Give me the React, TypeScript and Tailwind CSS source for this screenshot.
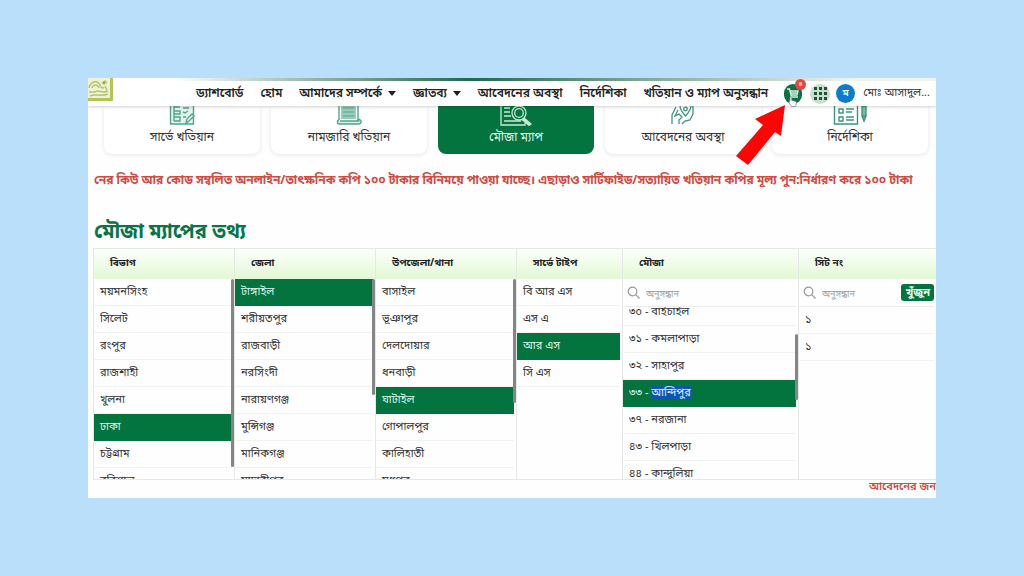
import type { ReactNode } from "react";

const nav = [
  { label: "ড্যাশবোর্ড" },
  { label: "হোম" },
  { label: "আমাদের সম্পর্কে", menu: true },
  { label: "জ্ঞাতব্য", menu: true },
  { label: "আবেদনের অবস্থা" },
  { label: "নির্দেশিকা" },
  { label: "খতিয়ান ও ম্যাপ অনুসন্ধান" },
];

function SurveyIcon() {
  return (
    <svg width="26" height="20" viewBox="0 0 26 20" fill="none" stroke="#4fa58b" strokeWidth="1.4">
      <path d="M1.5 0V18H24.500V0" fill="#e3f3ec" />
      <path d="M5 0v15M5 1h6M5 5h6v3H5M5 11h6v4H5M14 2h6M14 6l2 1 3-2M14 11h3" />
      <path d="M17 17l1-4 5-5 2 2-5 5z" fill="#fff" />
    </svg>
  );
}

function ScrollIcon() {
  return (
    <svg width="26" height="20" viewBox="0 0 26 20" fill="none" stroke="#4fa58b" strokeWidth="1.4">
      <path d="M3 0V14M22 0V14" />
      <path d="M5 0V13H20V0" fill="#9accbb" stroke="none" />
      <path d="M7 2h11M7 6h11M7 10h11" stroke="#6db59e" />
      <path d="M3 14c-2 0-2 4 0 4h20c2 0 3-3 1-4-1-1-3 0-2 1H4" fill="#d9eee6" />
    </svg>
  );
}

function MapSearchIcon() {
  return (
    <svg width="32" height="20" viewBox="0 0 32 20" fill="none" stroke="#c6ead7" strokeWidth="1.3">
      <path d="M1 0V19H25V17M4 2h6M4 6h6M4 10h7M4 15h17" />
      <circle cx="19" cy="7" r="7" />
      <circle cx="19" cy="7" r="4.300" />
      <path d="M24 12l7 6-2 1.500-7-6" fill="#c6ead7" />
    </svg>
  );
}

function HandPinIcon() {
  return (
    <svg width="26" height="20" viewBox="0 0 26 20" fill="none" stroke="#3c957a" strokeWidth="1.3">
      <path d="M10 0C10 4 13 7 15.500 10C18 7 21 4 21 0" />
      <circle cx="15.500" cy="3" r="1.800" />
      <path d="M6 1L2 9v9M8 4L5 10l4-2 3 3-3 3v4M23 0v8l-3 6-5 1-3 3" />
    </svg>
  );
}

function GuideIcon() {
  return (
    <svg width="34" height="20" viewBox="0 0 34 20" fill="none" stroke="#3c957a" strokeWidth="1.4">
      <path d="M1.500 0V18H24.500V0" />
      <path d="M6 3h4v4H6zM6 11h4v4H6zM13 3h8M13 6h6M13 11h8M13 14h8" />
      <path d="M29 0v10l2 5 2-5V0zM29 10h4" fill="#7dbba4" />
    </svg>
  );
}

const cards: { label: string; icon: ReactNode; active?: boolean }[] = [
  { label: "সার্ভে খতিয়ান", icon: <SurveyIcon /> },
  { label: "নামজারি খতিয়ান", icon: <ScrollIcon /> },
  { label: "মৌজা ম্যাপ", icon: <MapSearchIcon />, active: true },
  { label: "আবেদনের অবস্থা", icon: <HandPinIcon /> },
  { label: "নির্দেশিকা", icon: <GuideIcon /> },
];

function Row({ children, active }: { children: ReactNode; active?: boolean }) {
  return (
    <li>
      <button
        className={
          active
            ? "block h-[27px] w-full truncate bg-[#04743f] px-1.5 text-left text-[11px] leading-[25px] text-[#d9f5e6]"
            : "block h-[27px] w-full truncate border-b border-[#f1f3f1] px-1.5 text-left text-[11px] leading-[25px] text-[#333]"
        }
      >
        {children}
      </button>
    </li>
  );
}

function Column({
  title,
  bar,
  children,
}: {
  title: string;
  bar?: string;
  children: ReactNode;
}) {
  return (
    <section className="relative flex min-w-0 flex-col overflow-hidden border-l border-[#e6e8e6]">
      <h2 className="h-[30px] shrink-0 bg-linear-to-b from-[#fcfffa] to-[#e2f8d5] pl-4 text-[10px] leading-[30px] font-bold text-[#222]">
        {title}
      </h2>
      <div className="flex min-h-0 flex-1 flex-col overflow-hidden pr-0.5">{children}</div>
      {bar && <span className={"absolute right-0 w-[3px] rounded-full bg-[#858585] " + bar} />}
    </section>
  );
}

function Search({ label, action }: { label: string; action?: boolean }) {
  return (
    <div className="flex h-7 shrink-0 items-center gap-1.5 border-b border-[#ececec] pl-1">
      <svg width="13" height="13" viewBox="0 0 13 13" fill="none" stroke="#999" strokeWidth="1.2">
        <circle cx="5.500" cy="5.500" r="4.300" />
        <path d="M8.700 8.700L12.500 12.500" />
      </svg>
      <input
        aria-label={label}
        placeholder="অনুসন্ধান"
        className="h-5 w-0 min-w-0 flex-1 pt-1 text-[9px] outline-none placeholder:text-[#999]"
      />
      {action && (
        <button className="h-[17px] rounded-[3px] bg-[#04743f] px-1 text-[11px] leading-4 font-bold text-[#e3f7ec]">
          খুঁজুন
        </button>
      )}
    </div>
  );
}

const divisions = ["ময়মনসিংহ", "সিলেট", "রংপুর", "রাজশাহী", "খুলনা", "ঢাকা", "চট্টগ্রাম", "বরিশাল"];
const districts = ["টাঙ্গাইল", "শরীয়তপুর", "রাজবাড়ী", "নরসিংদী", "নারায়ণগঞ্জ", "মুন্সিগঞ্জ", "মানিকগঞ্জ", "মাদারীপুর"];
const upazilas = ["বাসাইল", "ভূঞাপুর", "দেলদোয়ার", "ধনবাড়ী", "ঘাটাইল", "গোপালপুর", "কালিহাতী", "মধুপুর"];
const surveys = ["বি আর এস", "এস এ", "আর এস", "সি এস"];
const mouzas = [
  ["৩০", "বাইচাইল"],
  ["৩১", "কমলাপাড়া"],
  ["৩২", "সাহাপুর"],
  ["৩৩", "আন্দিপুর"],
  ["৩৭", "নরজানা"],
  ["৪৩", "খিলপাড়া"],
  ["৪৪", "কান্দুলিয়া"],
];

export default function App() {
  return (
    <div className="min-h-screen bg-[#badffb] px-[88px] py-[78px] font-['Noto_Sans_Bengali','Noto_Sans',sans-serif]">
      <main className="relative overflow-hidden bg-[#fefefe]">
        <header className="relative z-10 bg-white shadow-[0_1px_3px_rgba(0,0,0,0.18)]">
          <div className="h-[3px] bg-linear-to-r from-white from-10% via-[#1c6a4c] via-45% to-[#eef5ee] to-90%" />
          <div className="flex h-[25px] items-center pr-1.5">
            <svg className="-mt-[3px] mr-auto shrink-0 self-start" width="25" height="23" viewBox="0 0 25 23">
              <path d="M0 0H25V23H0z" fill="#b3c45a" />
              <path d="M0 0H22V20H0z" fill="#eff3cf" />
              <path
                d="M1 10c1-6 8-9 11-3 1 3 3 4 4 2M4 10c1-4 6-4 7 0M14 5l3-2 2 2M1 14h6c3-3 7 2 13-1M2 18c5-3 10 1 18-2M17 8l2 4"
                fill="none"
                stroke="#b5c476"
                strokeWidth="1.5"
              />
              <circle cx="16" cy="5" r="1.500" fill="#8fae4e" />
            </svg>
            <nav className="flex items-center gap-[17px] text-[12px] whitespace-nowrap text-[#222]">
              {nav.map((n) => (
                <a key={n.label} href="#" className="flex items-center gap-1.5 font-semibold">
                  {n.label}
                  {n.menu && <span className="border-x-4 border-t-[5px] border-x-transparent border-t-[#222]" />}
                </a>
              ))}
            </nav>
            <button aria-label="কার্ট" className="relative ml-4 h-5 w-[18px] shrink-0 rounded-full bg-[#0b7044]">
              <svg className="block" width="18" height="24" viewBox="0 0 18 24" fill="none" stroke="#d9efe4" strokeWidth="1.4">
                <path d="M3 5h2.500l2 8H14M6 7h8l-1 4H7M7 9h7" />
                <path
                  d="M6 15.500v-2c0-1.200 1.800-1.200 1.800 0v3l3.500.8c1 .3 1.200 1 1 2l-.7 3.200H7.500L5 19z"
                  fill="#fff"
                  stroke="#777"
                  strokeWidth="0.700"
                />
              </svg>
              <span className="absolute -top-[5px] -right-1 size-[11px] rounded-full bg-[#e5453f] text-center text-[7px] leading-[11px] text-white">
                ৪
              </span>
            </button>
            <button aria-label="মেনু" className="ml-2 flex size-5 shrink-0 items-center justify-center rounded-full bg-[#c3e2cc]">
              <svg width="13" height="13" viewBox="0 0 13 13" fill="#2c4a3a">
                <path d="M0 0h3v3H0zM5 0h3v3H5zM10 0h3v3h-3zM0 5h3v3H0zM5 5h3v3H5zM10 5h3v3h-3zM0 10h3v3H0zM5 10h3v3H5zM10 10h3v3h-3z" />
              </svg>
            </button>
            <span className="ml-1.5 size-[19px] shrink-0 rounded-full bg-[#0c7bd0] text-center text-[10px] leading-[20px] font-semibold text-white">
              ম
            </span>
            <span className="ml-2 text-[11px] whitespace-nowrap text-[#333]">মোঃ আসাদুল...</span>
          </div>
        </header>
        <div className="grid grid-cols-5 gap-[11px] pr-2 pl-4">
          {cards.map((c) => (
            <button
              key={c.label}
              className={
                c.active
                  ? "flex h-12 flex-col items-center rounded-b-lg bg-[#04743f] text-[12px] leading-5 text-[#e3f7ec]"
                  : "flex h-12 flex-col items-center rounded-b-lg bg-white text-[12px] leading-5 text-[#333] shadow-[0_1px_4px_rgba(0,0,0,0.1)]"
              }
            >
              <span className="h-[22px] shrink-0">{c.icon}</span>
              {c.label}
            </button>
          ))}
        </div>
        <p className="mt-[18px] overflow-hidden pl-1.5 text-[12px] leading-[18px] font-bold whitespace-nowrap text-[#cf4a42]">
          নের কিউ আর কোড সম্বলিত অনলাইন/তাৎক্ষনিক কপি ১০০ টাকার বিনিময়ে পাওয়া যাচ্ছে। এছাড়াও সার্টিফাইড/সত্যায়িত খতিয়ান কপির মূল্য পুন:নির্ধারণ করে ১০০ টাকা
        </p>
        <h1 className="mt-7 pl-1.5 text-[20px] leading-[30px] font-bold text-[#087447]">মৌজা ম্যাপের তথ্য</h1>
        <div className="ml-[5px] grid h-[232px] grid-cols-[141fr_141fr_141fr_106fr_176fr_138fr] border-y border-[#e6e8e6]">
          <Column title="বিভাগ" bar="top-[30px] h-[188px]">
            <ul>{divisions.map((d) => <Row key={d} active={d === "ঢাকা"}>{d}</Row>)}</ul>
          </Column>
          <Column title="জেলা" bar="top-[30px] h-[116px]">
            <ul>{districts.map((d) => <Row key={d} active={d === "টাঙ্গাইল"}>{d}</Row>)}</ul>
          </Column>
          <Column title="উপজেলা/থানা" bar="top-[30px] h-[124px]">
            <ul>{upazilas.map((d) => <Row key={d} active={d === "ঘাটাইল"}>{d}</Row>)}</ul>
          </Column>
          <Column title="সার্ভে টাইপ">
            <ul>{surveys.map((d) => <Row key={d} active={d === "আর এস"}>{d}</Row>)}</ul>
          </Column>
          <Column title="মৌজা" bar="top-[85px] h-[66px]">
            <Search label="মৌজা" />
            <div className="min-h-0 flex-1 overflow-hidden">
              <ul className="-mt-2">
                {mouzas.map(([n, d]) => (
                  <Row key={n} active={n === "৩৩"}>
                    {n} - {n === "৩৩" ? <mark className="bg-[#0a55b5] text-[#e6f1ff]">{d}</mark> : d}
                  </Row>
                ))}
              </ul>
            </div>
          </Column>
          <Column title="সিট নং">
            <Search label="সিট নং" action />
            <ul><Row>১</Row><Row>১</Row></ul>
          </Column>
        </div>
        <p className="ml-auto h-[18px] w-[67px] overflow-hidden text-[11px] leading-[14px] font-semibold whitespace-nowrap text-[#cf4a42]">
          আবেদনের জন্য
        </p>
        <svg className="absolute top-[26px] right-[150px] z-20" width="50" height="62" viewBox="0 0 50 62" fill="#fb0505">
          <path d="M49 1L19 15L27 21L0 52L12 61L39 28L45 32z" />
        </svg>
      </main>
    </div>
  );
}
